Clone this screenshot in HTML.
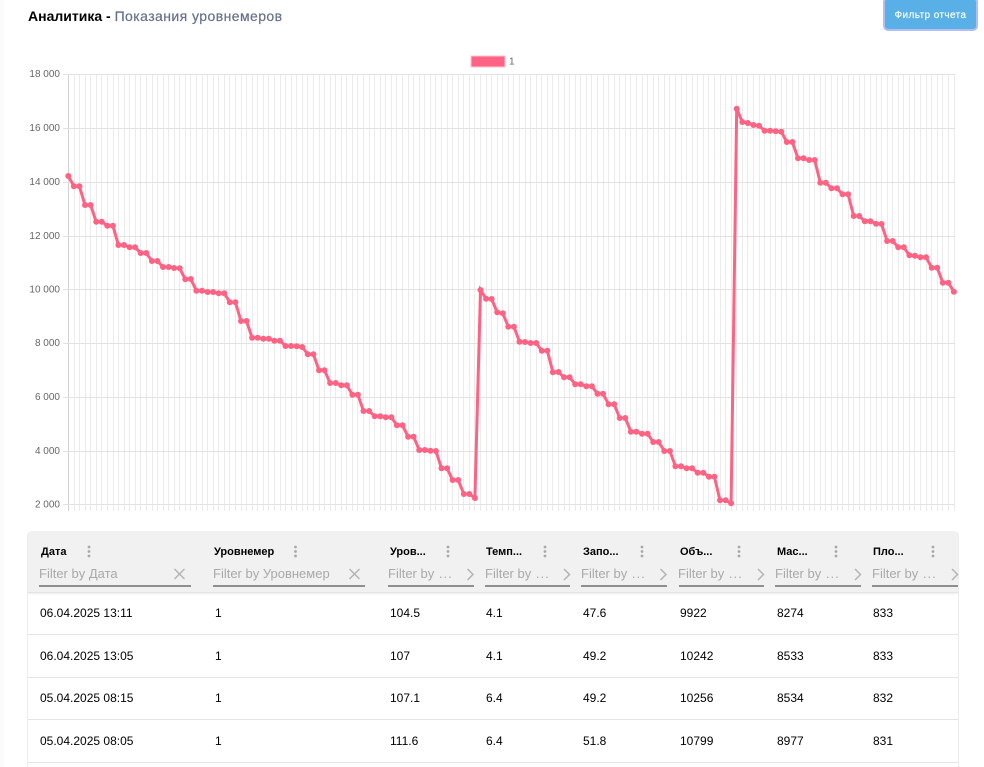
<!DOCTYPE html>
<html lang="ru">
<head>
<meta charset="utf-8">
<title>Аналитика</title>
<style>
html,body{margin:0;padding:0;background:#fff}
html{width:984px;height:767px;overflow:hidden}
body{width:984px;height:767px;overflow:hidden;position:relative;font-family:"Liberation Sans",sans-serif;color:#000}
.a{position:absolute;white-space:nowrap}
.edge{left:0;top:0;width:4px;height:767px;background:#fbfbfb}
.title{left:28px;top:7px;font-size:14px;line-height:18px;font-weight:bold;color:#000}
.title span{font-weight:normal;color:#667088;-webkit-text-stroke:.2px #667088;letter-spacing:.43px}
.btn{left:883px;top:-3px;width:91px;height:30px;background:#58b0e6;border:2px solid #b3bdf2;border-radius:5px;color:#fff;font-size:10px;line-height:34px;text-align:center;letter-spacing:.4px;-webkit-text-stroke:.15px #fff}
.table{left:27px;top:531px;width:930px;height:236px;border-left:1px solid #ececec;border-right:1px solid #ececec;border-radius:5px 5px 0 0;overflow:hidden}
.head{position:absolute;left:0;top:0;width:930px;height:61px;background:#f1f1f1;border-bottom:1px solid #e4e4e4;box-shadow:0 1px 2px rgba(0,0,0,.08)}
.hr{left:28px;width:930px;height:1px;background:#e4e4e4}
.th{top:545px;font-size:11px;line-height:14px;font-weight:bold;color:#000}
.ph{top:566px;font-size:13px;line-height:15px;color:#a9a9a9}
.ph i{font-style:normal;letter-spacing:1px;margin-left:1px}
.ul{top:585px;height:2px;background:#8f8f8f}
.td{font-size:12px;line-height:14px;color:#000}
svg{position:absolute;left:0;top:0}
</style>
</head>
<body>
<div class="a edge"></div>
<div class="a title">Аналитика - <span>Показания уровнемеров</span></div>
<div class="a btn">Фильтр отчета</div>

<svg width="984" height="767" viewBox="0 0 984 767" xmlns="http://www.w3.org/2000/svg">
<defs><marker id="m" markerUnits="userSpaceOnUse" markerWidth="8" markerHeight="8" refX="4" refY="4"><circle cx="4" cy="4" r="3" fill="#ff6384"/></marker></defs>
<rect x="471" y="56" width="34" height="11" fill="#ff6384" stroke="#ffc4d0" stroke-width="1"/>
<text x="509" y="64.500" font-size="10" fill="#666" font-family="Liberation Sans, sans-serif">1</text>
<path fill="none" stroke="#ebebeb" stroke-width="1" shape-rendering="crispEdges" d="M74.500 74V511M79.500 74V511M85.500 74V511M90.500 74V511M96.500 74V511M101.500 74V511M107.500 74V511M113.500 74V511M118.500 74V511M124.500 74V511M129.500 74V511M135.500 74V511M140.500 74V511M146.500 74V511M152.500 74V511M157.500 74V511M163.500 74V511M168.500 74V511M174.500 74V511M179.500 74V511M185.500 74V511M190.500 74V511M196.500 74V511M202.500 74V511M207.500 74V511M213.500 74V511M218.500 74V511M224.500 74V511M229.500 74V511M235.500 74V511M241.500 74V511M246.500 74V511M252.500 74V511M257.500 74V511M263.500 74V511M268.500 74V511M274.500 74V511M280.500 74V511M285.500 74V511M291.500 74V511M296.500 74V511M302.500 74V511M307.500 74V511M313.500 74V511M319.500 74V511M324.500 74V511M330.500 74V511M335.500 74V511M341.500 74V511M346.500 74V511M352.500 74V511M357.500 74V511M363.500 74V511M369.500 74V511M374.500 74V511M380.500 74V511M385.500 74V511M391.500 74V511M396.500 74V511M402.500 74V511M408.500 74V511M413.500 74V511M419.500 74V511M424.500 74V511M430.500 74V511M435.500 74V511M441.500 74V511M447.500 74V511M452.500 74V511M458.500 74V511M463.500 74V511M469.500 74V511M474.500 74V511M480.500 74V511M486.500 74V511M491.500 74V511M497.500 74V511M502.500 74V511M508.500 74V511M513.500 74V511M519.500 74V511M525.500 74V511M530.500 74V511M536.500 74V511M541.500 74V511M547.500 74V511M552.500 74V511M558.500 74V511M564.500 74V511M569.500 74V511M575.500 74V511M580.500 74V511M586.500 74V511M591.500 74V511M597.500 74V511M603.500 74V511M608.500 74V511M614.500 74V511M619.500 74V511M625.500 74V511M630.500 74V511M636.500 74V511M642.500 74V511M647.500 74V511M653.500 74V511M658.500 74V511M664.500 74V511M669.500 74V511M675.500 74V511M681.500 74V511M686.500 74V511M692.500 74V511M697.500 74V511M703.500 74V511M708.500 74V511M714.500 74V511M720.500 74V511M725.500 74V511M731.500 74V511M736.500 74V511M742.500 74V511M747.500 74V511M753.500 74V511M759.500 74V511M764.500 74V511M770.500 74V511M775.500 74V511M781.500 74V511M786.500 74V511M792.500 74V511M798.500 74V511M803.500 74V511M809.500 74V511M814.500 74V511M820.500 74V511M825.500 74V511M831.500 74V511M837.500 74V511M842.500 74V511M848.500 74V511M853.500 74V511M859.500 74V511M864.500 74V511M870.500 74V511M876.500 74V511M881.500 74V511M887.500 74V511M892.500 74V511M898.500 74V511M903.500 74V511M909.500 74V511M914.500 74V511M920.500 74V511M926.500 74V511M931.500 74V511M937.500 74V511M942.500 74V511M948.500 74V511M954.500 74V511"/>
<path fill="none" stroke="#d2d2d2" stroke-width="1" shape-rendering="crispEdges" d="M68.500 74V511"/>
<path fill="none" stroke="#e2e2e2" stroke-width="1" shape-rendering="crispEdges" d="M63 74.500H955M63 128.500H955M63 182.500H955M63 236.500H955M63 289.500H955M63 343.500H955M63 397.500H955M63 451.500H955M63 504.500H955"/>
<g font-family="Liberation Sans, sans-serif" font-size="10" fill="#666" text-anchor="end">
<text x="60" y="77">18 000</text>
<text x="60" y="131">16 000</text>
<text x="60" y="185">14 000</text>
<text x="60" y="239">12 000</text>
<text x="60" y="292.500">10 000</text>
<text x="60" y="346">8 000</text>
<text x="60" y="400">6 000</text>
<text x="60" y="454">4 000</text>
<text x="60" y="507.500">2 000</text>
</g>
<polyline fill="none" stroke="#ff6384" stroke-width="3" stroke-linejoin="miter" marker-start="url(#m)" marker-mid="url(#m)" marker-end="url(#m)" points="68.3,176 73.9,186.300 79.400,186.300 85,205 90.600,205 96.200,221.700 101.700,221.700 107.300,225.700 112.900,225.700 118.400,245 124,245 129.600,247.300 135.100,247.300 140.700,253 146.300,253 151.900,261 157.400,261 163,267 168.600,267 174.100,268 179.700,268.300 185.300,279.300 190.800,279 196.400,290.700 202,290.700 207.600,292 213.100,292 218.700,293.300 224.300,293.300 229.800,302.300 235.400,302.300 241,321 246.500,321 252.100,337.700 257.700,337.700 263.300,338.700 268.800,338.700 274.400,340.700 280,340.700 285.500,346 291.100,346 296.700,346.300 302.200,347 307.800,354.300 313.400,354.300 319,370.300 324.500,370.300 330.100,383 335.700,383 341.200,385.300 346.800,385.300 352.400,394.700 357.900,394.700 363.500,411 369.100,411 374.700,416.300 380.200,416.300 385.800,417.300 391.400,417.300 396.900,425.300 402.500,425.300 408.100,436.700 413.600,436.700 419.200,450 424.800,450 430.400,450.700 435.900,451 441.500,468.300 447.100,468.300 452.600,480 458.200,480 463.800,494 469.300,494 474.900,498 480.500,290 486.100,298.700 491.600,299 497.200,312.300 502.800,313.300 508.300,326.700 513.900,326.700 519.500,341.700 525,342 530.600,343 536.200,343 541.800,350.700 547.300,350.700 552.900,372.300 558.500,372 564,377.300 569.600,377.300 575.200,384.300 580.700,384.300 586.300,386.300 591.900,386.300 597.500,393.700 603,393.700 608.600,404.300 614.200,404.300 619.700,418 625.300,418 630.900,431.700 636.400,431.700 642,433.700 647.600,433.700 653.200,442 658.700,442 664.300,451 669.900,451 675.400,466.300 681,466.300 686.600,468.300 692.100,468.300 697.700,472.700 703.300,472.700 708.900,476.700 714.400,476.700 720,500.300 725.600,500.300 731.100,503.300 736.700,108.700 742.300,122 747.800,123 753.400,125 759,125.700 764.600,130.700 770.100,130.700 775.700,131.300 781.300,131.700 786.800,142 792.400,142 798,158.300 803.500,158.300 809.100,160 814.700,160 820.300,182.700 825.800,182.700 831.400,188.300 837,188.300 842.500,194.300 848.100,194.300 853.700,216 859.200,216 864.800,221.300 870.400,221.300 876,223.700 881.500,224 887.100,241 892.700,241 898.200,247.300 903.800,247.300 909.400,255.300 914.900,255.700 920.500,257.300 926.100,257.300 931.700,267.700 937.200,267.700 942.800,282.700 948.400,282.700 953.900,291.700"/>
</svg>

<div class="a table"><div class="head"></div></div>
<div class="a hr" style="top:634px"></div>
<div class="a hr" style="top:677px"></div>
<div class="a hr" style="top:719px"></div>
<div class="a hr" style="top:762px"></div>

<div class="a th" style="left:41px">Дата</div>
<div class="a th" style="left:214px">Уровнемер</div>
<div class="a th" style="left:390px">Уров...</div>
<div class="a th" style="left:486px">Темп...</div>
<div class="a th" style="left:583px">Запо...</div>
<div class="a th" style="left:680px">Объ...</div>
<div class="a th" style="left:777px">Мас...</div>
<div class="a th" style="left:873px">Пло...</div>

<div class="a ph" style="left:39px">Filter by Дата</div>
<div class="a ph" style="left:213px">Filter by Уровнемер</div>
<div class="a ph" style="left:388px">Filter by <i>...</i></div>
<div class="a ph" style="left:485px">Filter by <i>...</i></div>
<div class="a ph" style="left:581px">Filter by <i>...</i></div>
<div class="a ph" style="left:678px">Filter by <i>...</i></div>
<div class="a ph" style="left:775px">Filter by <i>...</i></div>
<div class="a ph" style="left:872px">Filter by <i>...</i></div>

<div class="a ul" style="left:39px;width:152px"></div>
<div class="a ul" style="left:213px;width:152px"></div>
<div class="a ul" style="left:388px;width:86px"></div>
<div class="a ul" style="left:485px;width:85px"></div>
<div class="a ul" style="left:581px;width:86px"></div>
<div class="a ul" style="left:679px;width:85px"></div>
<div class="a ul" style="left:775px;width:86px"></div>
<div class="a ul" style="left:872px;width:86px"></div>

<svg width="984" height="767" viewBox="0 0 984 767" xmlns="http://www.w3.org/2000/svg">
<g fill="#a8a8a8">
<circle cx="89" cy="547" r="1.400"/><circle cx="89" cy="551.500" r="1.400"/><circle cx="89" cy="556" r="1.400"/>
<circle cx="295.500" cy="547" r="1.400"/><circle cx="295.500" cy="551.500" r="1.400"/><circle cx="295.500" cy="556" r="1.400"/>
<circle cx="448" cy="547" r="1.400"/><circle cx="448" cy="551.500" r="1.400"/><circle cx="448" cy="556" r="1.400"/>
<circle cx="545" cy="547" r="1.400"/><circle cx="545" cy="551.500" r="1.400"/><circle cx="545" cy="556" r="1.400"/>
<circle cx="642" cy="547" r="1.400"/><circle cx="642" cy="551.500" r="1.400"/><circle cx="642" cy="556" r="1.400"/>
<circle cx="739" cy="547" r="1.400"/><circle cx="739" cy="551.500" r="1.400"/><circle cx="739" cy="556" r="1.400"/>
<circle cx="836" cy="547" r="1.400"/><circle cx="836" cy="551.500" r="1.400"/><circle cx="836" cy="556" r="1.400"/>
<circle cx="933" cy="547" r="1.400"/><circle cx="933" cy="551.500" r="1.400"/><circle cx="933" cy="556" r="1.400"/>
</g>
<g fill="none" stroke="#b4b4b4" stroke-width="1.500">
<path d="M174.500 569L184.500 579M184.500 569L174.500 579"/>
<path d="M349.500 569L359.500 579M359.500 569L349.500 579"/>
<path d="M467.500 569L473 574.500L467.500 580"/>
<path d="M564 569L569.500 574.500L564 580"/>
<path d="M660.500 569L666 574.500L660.500 580"/>
<path d="M758 569L763.500 574.500L758 580"/>
<path d="M855 569L860.500 574.500L855 580"/>
<path d="M952 569L957.500 574.500L952 580"/>
</g>
</svg>

<div class="a td" style="left:40px;top:606px">06.04.2025 13:11</div>
<div class="a td" style="left:215px;top:606px">1</div>
<div class="a td" style="left:390px;top:606px">104.5</div>
<div class="a td" style="left:486px;top:606px">4.1</div>
<div class="a td" style="left:583px;top:606px">47.6</div>
<div class="a td" style="left:680px;top:606px">9922</div>
<div class="a td" style="left:777px;top:606px">8274</div>
<div class="a td" style="left:873px;top:606px">833</div>

<div class="a td" style="left:40px;top:649px">06.04.2025 13:05</div>
<div class="a td" style="left:215px;top:649px">1</div>
<div class="a td" style="left:390px;top:649px">107</div>
<div class="a td" style="left:486px;top:649px">4.1</div>
<div class="a td" style="left:583px;top:649px">49.2</div>
<div class="a td" style="left:680px;top:649px">10242</div>
<div class="a td" style="left:777px;top:649px">8533</div>
<div class="a td" style="left:873px;top:649px">833</div>

<div class="a td" style="left:40px;top:691px">05.04.2025 08:15</div>
<div class="a td" style="left:215px;top:691px">1</div>
<div class="a td" style="left:390px;top:691px">107.1</div>
<div class="a td" style="left:486px;top:691px">6.4</div>
<div class="a td" style="left:583px;top:691px">49.2</div>
<div class="a td" style="left:680px;top:691px">10256</div>
<div class="a td" style="left:777px;top:691px">8534</div>
<div class="a td" style="left:873px;top:691px">832</div>

<div class="a td" style="left:40px;top:734px">05.04.2025 08:05</div>
<div class="a td" style="left:215px;top:734px">1</div>
<div class="a td" style="left:390px;top:734px">111.6</div>
<div class="a td" style="left:486px;top:734px">6.4</div>
<div class="a td" style="left:583px;top:734px">51.8</div>
<div class="a td" style="left:680px;top:734px">10799</div>
<div class="a td" style="left:777px;top:734px">8977</div>
<div class="a td" style="left:873px;top:734px">831</div>
</body>
</html>
